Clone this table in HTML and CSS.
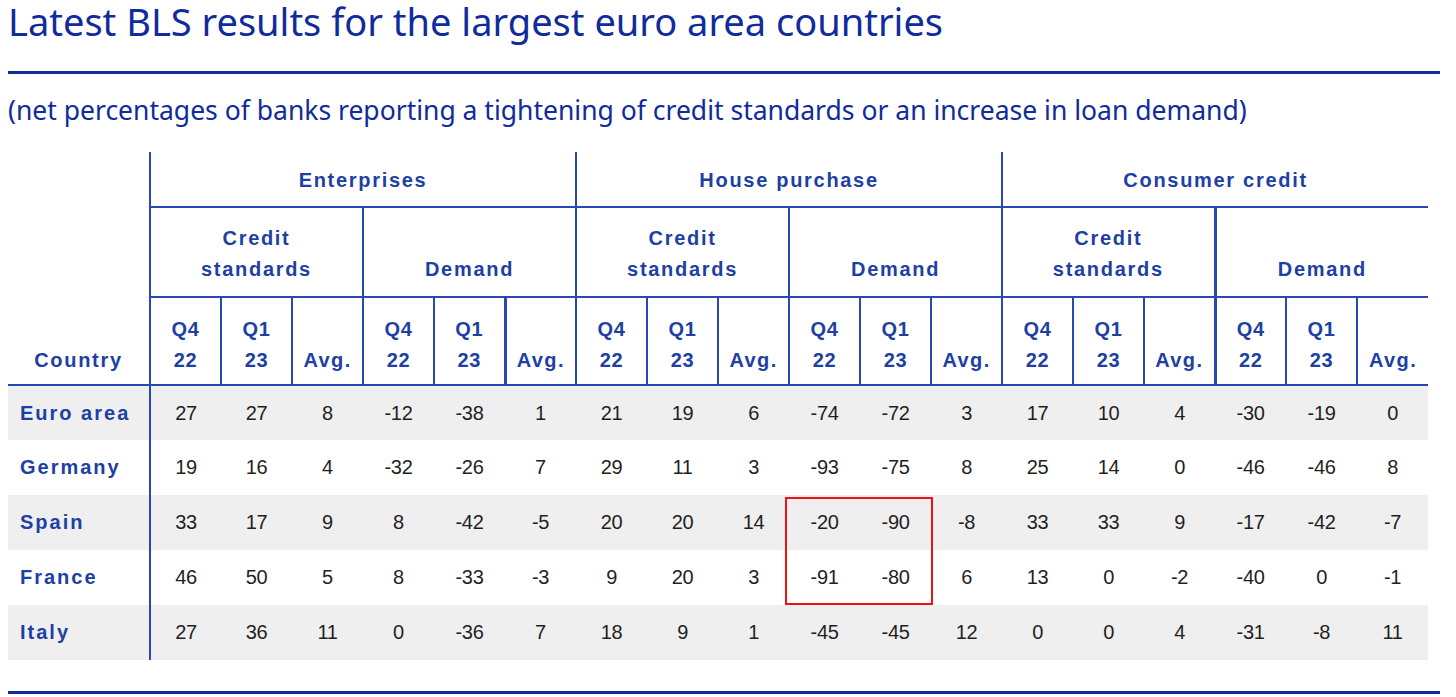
FILE: index.html
```html
<!DOCTYPE html>
<html lang="en">
<head>
<meta charset="utf-8">
<title>Latest BLS results</title>
<link rel="stylesheet" href="styles.css">
</head>
<body>
<div class="page">
  <h1 class="title">Latest BLS results for the largest euro area countries</h1>
  <div class="rule"></div>
  <p class="subtitle">(net percentages of banks reporting a tightening of credit standards or an increase in loan demand)</p>
  <div class="table-wrap">
    <table class="bls">
      <colgroup>
        <col class="c-country">
        <col><col><col><col><col><col>
        <col><col><col><col><col><col>
        <col><col><col><col><col><col>
      </colgroup>
      <thead>
        <tr class="h1">
          <th class="country" rowspan="3">Country</th>
          <th colspan="6" class="grp">Enterprises</th>
          <th colspan="6" class="grp">House purchase</th>
          <th colspan="6" class="grp">Consumer credit</th>
        </tr>
        <tr class="h2">
          <th colspan="3">Credit<br>standards</th>
          <th colspan="3">Demand</th>
          <th colspan="3">Credit<br>standards</th>
          <th colspan="3">Demand</th>
          <th colspan="3">Credit<br>standards</th>
          <th colspan="3" class="thick">Demand</th>
        </tr>
        <tr class="h3">
          <th>Q4<br>22</th><th>Q1<br>23</th><th>Avg.</th>
          <th>Q4<br>22</th><th>Q1<br>23</th><th class="thick">Avg.</th>
          <th>Q4<br>22</th><th>Q1<br>23</th><th>Avg.</th>
          <th>Q4<br>22</th><th>Q1<br>23</th><th>Avg.</th>
          <th>Q4<br>22</th><th>Q1<br>23</th><th>Avg.</th>
          <th class="thick">Q4<br>22</th><th>Q1<br>23</th><th>Avg.</th>
        </tr>
      </thead>
      <tbody>
        <tr class="shade">
          <th class="name">Euro area</th>
          <td>27</td><td>27</td><td>8</td><td>-12</td><td>-38</td><td>1</td>
          <td>21</td><td>19</td><td>6</td><td>-74</td><td>-72</td><td>3</td>
          <td>17</td><td>10</td><td>4</td><td>-30</td><td>-19</td><td>0</td>
        </tr>
        <tr>
          <th class="name">Germany</th>
          <td>19</td><td>16</td><td>4</td><td>-32</td><td>-26</td><td>7</td>
          <td>29</td><td>11</td><td>3</td><td>-93</td><td>-75</td><td>8</td>
          <td>25</td><td>14</td><td>0</td><td>-46</td><td>-46</td><td>8</td>
        </tr>
        <tr class="shade">
          <th class="name">Spain</th>
          <td>33</td><td>17</td><td>9</td><td>8</td><td>-42</td><td>-5</td>
          <td>20</td><td>20</td><td>14</td><td>-20</td><td>-90</td><td>-8</td>
          <td>33</td><td>33</td><td>9</td><td>-17</td><td>-42</td><td>-7</td>
        </tr>
        <tr>
          <th class="name">France</th>
          <td>46</td><td>50</td><td>5</td><td>8</td><td>-33</td><td>-3</td>
          <td>9</td><td>20</td><td>3</td><td>-91</td><td>-80</td><td>6</td>
          <td>13</td><td>0</td><td>-2</td><td>-40</td><td>0</td><td>-1</td>
        </tr>
        <tr class="shade">
          <th class="name">Italy</th>
          <td>27</td><td>36</td><td>11</td><td>0</td><td>-36</td><td>7</td>
          <td>18</td><td>9</td><td>1</td><td>-45</td><td>-45</td><td>12</td>
          <td>0</td><td>0</td><td>4</td><td>-31</td><td>-8</td><td>11</td>
        </tr>
      </tbody>
    </table>
    <div class="highlight"></div>
  </div>
  <div class="rule bottom"></div>
</div>
</body>
</html>
```

FILE: styles.css
```css
html, body {
  margin: 0;
  padding: 0;
  background: #ffffff;
}

.page {
  padding: 0 16px 0 8px;
}

.title {
  margin: 0;
  font-family: "Noto Sans", "Open Sans", sans-serif;
  font-weight: 400;
  font-size: 38px;
  line-height: 43px;
  color: #0f2b9c;
}

.rule {
  margin-top: 28px;
  height: 3px;
  background: #14299b;
}

.subtitle {
  margin: 21px 0 0 0;
  font-family: "Noto Sans", "Open Sans", sans-serif;
  font-size: 26.5px;
  line-height: 30px;
  color: #0f2b9c;
}

.table-wrap {
  position: relative;
  margin-top: 27px;
  width: 1420px;
}

.bls {
  border-collapse: collapse;
  table-layout: fixed;
  width: 1420px;
  font-family: "Liberation Sans", Arial, sans-serif;
}

.bls col {
  width: 71px;
}

.bls col.c-country {
  width: 142px;
}

.bls th,
.bls td {
  padding: 0;
}

.bls thead th {
  font-size: 20px;
  font-weight: 700;
  color: #1e3fa3;
  letter-spacing: 1.7px;
  line-height: 31px;
  vertical-align: bottom;
  text-align: center;
  border-left: 2px solid #2748b2;
  border-bottom: 2px solid #2748b2;
  padding-bottom: 10px;
}

.bls thead th.country {
  border-left: none;
  border-right: 2px solid #2748b2;
  text-align: center;
  padding-bottom: 8px;
  letter-spacing: 1.7px;
}

.bls tr.h1 th {
  height: 44px;
  padding-bottom: 10px;
}

.bls tr.h1 th.country {
  padding-bottom: 8px;
}

.bls tr.h2 th {
  height: 77px;
  padding-bottom: 11px;
}

.bls tr.h3 th {
  height: 78px;
  padding-bottom: 8px;
  letter-spacing: 0.6px;
}

.bls tr.h3 th:nth-child(3n) {
  letter-spacing: 1.4px;
}

.bls thead th.thick {
  border-left-width: 3px;
}

.bls tbody th.name {
  text-align: left;
  padding-left: 12px;
  font-size: 20px;
  font-weight: 700;
  color: #1e3fa3;
  letter-spacing: 2px;
  border-right: 2px solid #2748b2;
}

.bls tbody td {
  font-size: 20px;
  color: #1f1f1f;
  text-align: center;
  letter-spacing: -0.3px;
}

.bls tbody tr {
  height: 55px;
}

.bls tbody tr.shade {
  background: #efefef;
}

.highlight {
  position: absolute;
  left: 777px;
  top: 345px;
  width: 144px;
  height: 104px;
  border: 2px solid #ee1111;
  pointer-events: none;
}

.rule.bottom {
  margin-top: 31px;
  background: #13289a;
}
```
